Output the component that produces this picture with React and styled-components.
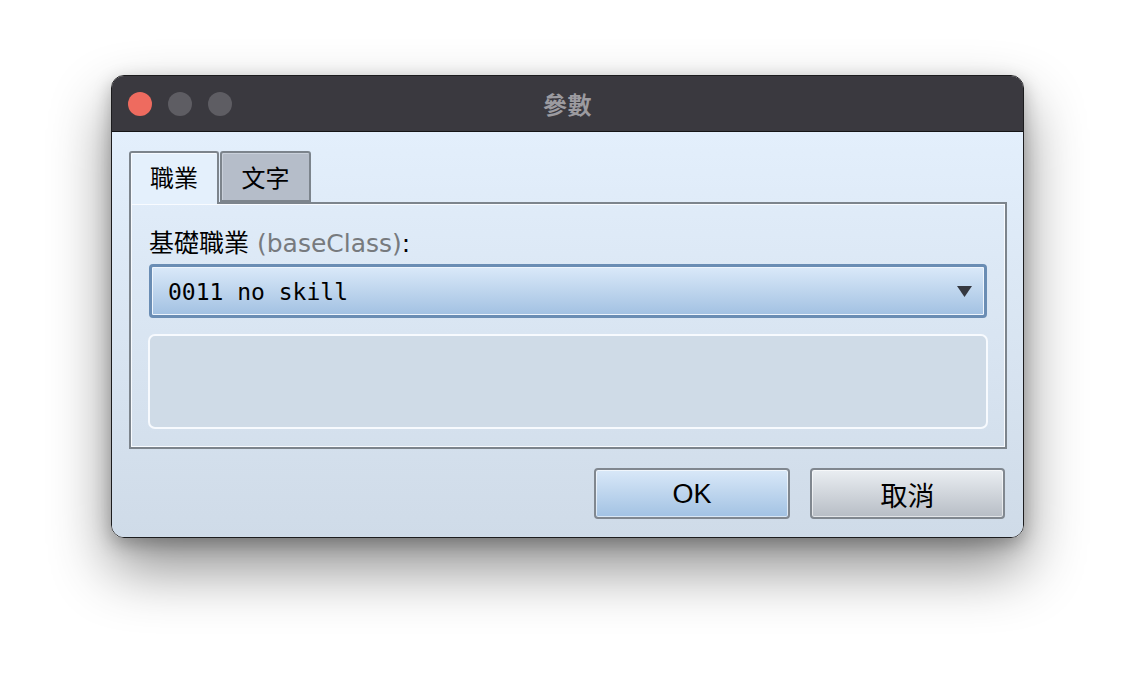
import React from "react";
import styled, { createGlobalStyle } from "styled-components";

const Global = createGlobalStyle`
  html, body { margin: 0; padding: 0; background: #ffffff; }
  body { font-family: "DejaVu Sans", "Noto Sans CJK TC", sans-serif; }
  * { box-sizing: border-box; }
`;

const Page = styled.div`
  width: 1136px;
  height: 686px;
  display: flex;
  justify-content: center;
  align-items: flex-start;
  padding-top: 75px;
  padding-right: 1px;
`;

const Window = styled.div`
  width: 913px;
  height: 463px;
  border: 1px solid #1c1c1e;
  border-radius: 13px;
  overflow: hidden;
  display: flex;
  flex-direction: column;
  box-shadow: 0 30px 60px rgba(0, 0, 0, 0.45), 0 6px 18px rgba(0, 0, 0, 0.25);
`;

const TitleBar = styled.div`
  height: 56px;
  flex: none;
  background: #3a393f;
  border-bottom: 1px solid #141416;
  display: grid;
  grid-template-columns: 1fr auto 1fr;
  align-items: center;
  padding: 0 16px;
`;

const Lights = styled.div`
  display: flex;
  gap: 16px;
  align-items: center;
`;

const Light = styled.span`
  width: 24px;
  height: 24px;
  border-radius: 50%;
  background: ${(p) => p.$color};
`;

const Title = styled.div`
  font-family: "Noto Sans CJK TC", sans-serif;
  font-weight: 700;
  font-size: 24px;
  color: #9c9ba0;
  letter-spacing: 0.5px;
  line-height: 1;
`;

const Body = styled.div`
  flex: 1;
  background: linear-gradient(#e3effc, #cfdbe8);
  padding: 19px 16px 18px 17px;
  display: flex;
  flex-direction: column;
`;

const TabRow = styled.div`
  display: flex;
  height: 51px;
  align-items: flex-start;
`;

const Tab = styled.div`
  position: relative;
  z-index: ${(p) => (p.$active ? 1 : 0)};
  width: ${(p) => (p.$active ? "90px" : "91px")};
  height: ${(p) => (p.$active ? "53px" : "51px")};
  margin-left: ${(p) => (p.$active ? "0" : "1px")};
  border: 2px solid #7c848c;
  border-bottom: ${(p) => (p.$active ? "none" : "2px solid #7c848c")};
  border-radius: 3px 3px 0 0;
  background: ${(p) => (p.$active ? "#e4f0fc" : "#b5bdc9")};
  box-shadow: ${(p) =>
    p.$active ? "inset 1px 1px 0 #f6faff" : "inset 1px 1px 0 #c9d0da"};
  display: flex;
  align-items: center;
  justify-content: center;
  padding-bottom: ${(p) => (p.$active ? "5px" : "1px")};
  font-family: "Noto Sans CJK TC", sans-serif;
  font-size: 24px;
  color: #000;
`;

const Panel = styled.div`
  height: 247px;
  border: 2px solid #7c848c;
  box-shadow: inset 1px 1px 0 #f8fbff, inset -1px -1px 0 #f8fbff;
  padding: 25px 18px 18px 18px;
  display: flex;
  flex-direction: column;
`;

const Label = styled.div`
  height: 30px;
  line-height: 30px;
  font-size: 25px;
  color: #000;
  margin-bottom: 5px;
  white-space: nowrap;
`;

const Hint = styled.span`
  color: #777a7e;
`;

const Select = styled.div`
  height: 54px;
  border: 3px solid #6a8db4;
  border-radius: 4px;
  background: linear-gradient(#dae9f9, #a2c1e2);
  box-shadow: inset 0 0 0 1px #eef5fd;
  display: flex;
  align-items: center;
  justify-content: space-between;
  padding: 0 12px 0 16px;
`;

const SelectText = styled.span`
  font-family: "DejaVu Sans Mono", monospace;
  font-size: 23px;
  color: #000;
  padding-top: 2px;
`;

const Arrow = styled.svg`
  width: 15px;
  height: 11px;
  display: block;
`;

const Description = styled.div`
  margin: 16px -1px 0;
  height: 95px;
  border: 2px solid #f7fafe;
  border-radius: 7px;
  background: #cfdbe7;
`;

const ButtonRow = styled.div`
  margin-top: 19px;
  display: flex;
  justify-content: flex-end;
  gap: 20px;
  padding-right: 2px;
`;

const Button = styled.button`
  width: ${(p) => (p.$primary ? "196px" : "195px")};
  height: 51px;
  border: 2px solid #80878f;
  border-radius: 4px;
  background: ${(p) =>
    p.$primary
      ? "linear-gradient(#d9e8f8, #a2c2e3)"
      : "linear-gradient(#eaeef2, #b7bdc5)"};
  box-shadow: inset 0 0 0 1px rgba(255, 255, 255, 0.6);
  font-family: "Liberation Sans", "Noto Sans CJK TC", sans-serif;
  font-size: 27px;
  color: #000;
  display: flex;
  align-items: center;
  justify-content: center;
  padding: 2px 0 0;
`;

export default function App() {
  return (
    <>
      <Global />
      <Page>
        <Window>
          <TitleBar>
            <Lights>
              <Light $color="#ee6b5f" />
              <Light $color="#5e5d63" />
              <Light $color="#5e5d63" />
            </Lights>
            <Title>參數</Title>
            <div />
          </TitleBar>
          <Body>
            <TabRow>
              <Tab $active>職業</Tab>
              <Tab>文字</Tab>
            </TabRow>
            <Panel>
              <Label>
                基礎職業 <Hint>(baseClass)</Hint>:
              </Label>
              <Select>
                <SelectText>0011 no skill</SelectText>
                <Arrow viewBox="0 0 15 11">
                  <polygon points="0,0 15,0 7.5,11" fill="#353840" />
                </Arrow>
              </Select>
              <Description />
            </Panel>
            <ButtonRow>
              <Button $primary>OK</Button>
              <Button>取消</Button>
            </ButtonRow>
          </Body>
        </Window>
      </Page>
    </>
  );
}
